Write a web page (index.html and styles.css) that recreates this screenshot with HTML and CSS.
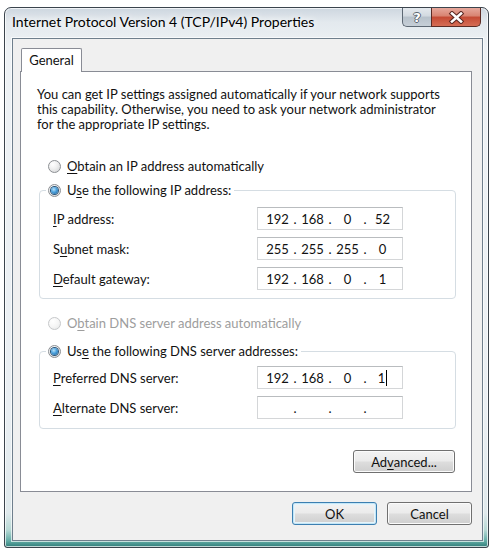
FILE: index.html
```html
<!DOCTYPE html>
<html lang="en">
<head>
<meta charset="utf-8">
<title>Internet Protocol Version 4 (TCP/IPv4) Properties</title>
<link rel="stylesheet" href="styles.css">
</head>
<body>
<div class="window">
  <div class="titlebar">
    <div class="title">Internet Protocol Version 4 (TCP/IPv4) Properties</div>
    <div class="caption-buttons">
      <div class="cap-btn help"><span class="help-glyph">?</span></div>
      <div class="cap-btn close">
        <svg class="close-x" width="17" height="13" viewBox="0 0 17 13">
          <path d="M4 2.5 L13 10.5 M13 2.5 L4 10.5" stroke="#5a2620" stroke-width="4.6" stroke-linecap="square" fill="none"/>
          <path d="M4 2.5 L13 10.5 M13 2.5 L4 10.5" stroke="#ffffff" stroke-width="2.6" stroke-linecap="square" fill="none"/>
        </svg>
      </div>
    </div>
  </div>
  <div class="client">
    <div class="tabs"><div class="tab">General</div></div>
    <div class="panel">
      <p class="intro">You can get IP settings assigned automatically if your network supports<br>this capability. Otherwise, you need to ask your network administrator<br>for the appropriate IP settings.</p>

      <div class="option option-ip-auto"><span class="radio"></span><span><span class="ak">O</span>btain an IP address automatically</span></div>

      <fieldset class="group group-ip">
        <legend class="legend"><span class="option"><span class="radio checked"></span><span>U<span class="ak">s</span>e the following IP address:</span></span></legend>
        <div class="rows">
          <div class="row"><span class="row-label"><span class="ak">I</span>P address:</span>
            <div class="ipbox"><span class="oct">192</span><span class="dot">.</span><span class="oct">168</span><span class="dot">.</span><span class="oct">0</span><span class="dot">.</span><span class="oct">52</span></div></div>
          <div class="row"><span class="row-label">S<span class="ak">u</span>bnet mask:</span>
            <div class="ipbox"><span class="oct">255</span><span class="dot">.</span><span class="oct">255</span><span class="dot">.</span><span class="oct">255</span><span class="dot">.</span><span class="oct">0</span></div></div>
          <div class="row"><span class="row-label"><span class="ak">D</span>efault gateway:</span>
            <div class="ipbox"><span class="oct">192</span><span class="dot">.</span><span class="oct">168</span><span class="dot">.</span><span class="oct">0</span><span class="dot">.</span><span class="oct">1</span></div></div>
        </div>
      </fieldset>

      <div class="option option-dns-auto disabled"><span class="radio"></span><span>O<span class="ak">b</span>tain DNS server address automatically</span></div>

      <fieldset class="group group-dns">
        <legend class="legend"><span class="option"><span class="radio checked"></span><span>Us<span class="ak">e</span> the following DNS server addresses:</span></span></legend>
        <div class="rows">
          <div class="row"><span class="row-label"><span class="ak">P</span>referred DNS server:</span>
            <div class="ipbox"><span class="oct">192</span><span class="dot">.</span><span class="oct">168</span><span class="dot">.</span><span class="oct">0</span><span class="dot">.</span><span class="oct"><span class="caret">1</span></span></div></div>
          <div class="row"><span class="row-label"><span class="ak">A</span>lternate DNS server:</span>
            <div class="ipbox"><span class="oct"></span><span class="dot">.</span><span class="oct"></span><span class="dot">.</span><span class="oct"></span><span class="dot">.</span><span class="oct"></span></div></div>
        </div>
      </fieldset>

      <div class="advanced-row"><button class="btn btn-advanced" type="button">Ad<span class="ak">v</span>anced...</button></div>
    </div>
    <div class="actions">
      <button class="btn btn-default" type="button">OK</button>
      <button class="btn" type="button">Cancel</button>
    </div>
  </div>
</div>
</body>
</html>
```

FILE: styles.css
```css
* { box-sizing: border-box; }

html, body {
  margin: 0;
  padding: 0;
  background: #ffffff;
}

body {
  font-family: Lato, "Liberation Sans", sans-serif;
  font-size: 13px;
  color: #111111;
}

.window {
  margin: 7px 0 0 4px;
  width: 485px;
  height: 541px;
  border: 1px solid #3b444d;
  border-radius: 7px 7px 3px 3px;
  padding: 0 5px 6px 7px;
  background:
    linear-gradient(to bottom, rgba(255,255,255,0) 0, rgba(255,255,255,0) 505px, #b7d9d5 522px, #62aca6 533px, #2f7d79 539px),
    linear-gradient(to bottom, #cdd6df 0, #e3e9ee 14px, #eef2f5 40px, #eaeff3 400px, #dfe9ec 505px);
  box-shadow: inset 0 0 0 1px rgba(255,255,255,0.7);
}

.titlebar {
  height: 30px;
  display: flex;
  justify-content: space-between;
  align-items: flex-start;
}

.title {
  padding-top: 6px;
  font-size: 14px;
  line-height: 16px;
  color: #000000;
  text-shadow: 0 0 6px #ffffff, 0 0 10px #ffffff;
}

.caption-buttons {
  display: flex;
  margin-right: 2px;
}

.cap-btn {
  height: 19px;
  display: flex;
  align-items: center;
  justify-content: center;
  border: 1px solid #5d6874;
  border-top: none;
}

.help {
  width: 29px;
  border-right: none;
  border-radius: 0 0 0 5px;
  background: linear-gradient(to bottom, #e4e9ee 0%, #d2d9e0 45%, #b7c1cb 50%, #c6cfd7 100%);
}

.help-glyph {
  font-family: "DejaVu Sans", sans-serif;
  font-weight: bold;
  font-size: 13px;
  line-height: 13px;
  color: #ffffff;
  text-shadow: 1px 0 0 #5a6570, -1px 0 0 #5a6570, 0 1px 0 #5a6570, 0 -1px 0 #5a6570;
}

.close {
  width: 50px;
  border-color: #5b2b24;
  border-radius: 0 0 5px 0;
  background: linear-gradient(to bottom, #e6a89c 0%, #d88371 45%, #c44a34 50%, #d56d55 100%);
}

.close-x { display: block; }

.client {
  height: 503px;
  border: 1px solid #6f7f8d;
  background: #f0f0f0;
  padding: 9px 10px 0 7px;
  display: flex;
  flex-direction: column;
  box-shadow: 0 0 0 1px rgba(255,255,255,0.65);
}

.tabs {
  display: flex;
  padding-left: 1px;
}

.tab {
  position: relative;
  z-index: 1;
  width: 61px;
  height: 24px;
  margin-bottom: -1px;
  border: 1px solid #898c95;
  border-bottom: none;
  border-radius: 2px 2px 0 0;
  background: #ffffff;
  text-align: center;
  line-height: 22px;
}

.panel {
  height: 421px;
  border: 1px solid #898c95;
  background: #ffffff;
  padding: 15px 15px 0 16px;
}

.intro {
  margin: 0;
  line-height: 15px;
}

.ak {
  text-decoration: underline;
  text-underline-offset: 2px;
}

.option {
  display: flex;
  align-items: center;
  gap: 6px;
  height: 16px;
  line-height: 16px;
}

.option-ip-auto {
  margin: 26px 0 0 11px;
}

.option-dns-auto {
  margin: 16px 0 0 11px;
}

.disabled { color: #9d9d9d; }

.radio {
  width: 13px;
  height: 13px;
  flex: none;
  border-radius: 50%;
  border: 1px solid #8c8f93;
  background: radial-gradient(circle at 35% 30%, #ffffff 0%, #f1f1f1 40%, #cfd1d3 100%);
  display: flex;
  align-items: center;
  justify-content: center;
}

.radio.checked::after {
  content: "";
  width: 7px;
  height: 7px;
  border-radius: 50%;
  background: radial-gradient(circle at 40% 35%, #b9e3fb 0%, #4aa0dc 45%, #1c5d92 100%);
  box-shadow: 0 0 0 1px #2a5478;
}

.disabled .radio {
  border-color: #c6c8ca;
  background: radial-gradient(circle at 35% 30%, #ffffff 0%, #f6f6f6 50%, #e4e5e6 100%);
}

.group {
  margin: 0 0 0 2px;
  border: 1px solid #d5dde3;
  border-radius: 4px;
  min-width: 0;
}

.group-ip {
  margin-top: 8px;
  padding: 9px 0 8px 6px;
}

.group-dns {
  margin-top: 12px;
  padding: 7px 0 9px 6px;
}

.legend {
  padding: 0 3px 0 2px;
  line-height: 16px;
  height: 16px;
}

.rows {
  display: flex;
  flex-direction: column;
  gap: 7px;
  padding-left: 7px;
}

.row {
  display: flex;
  align-items: center;
  height: 23px;
}

.row-label {
  width: 204px;
  flex: none;
}

.ipbox {
  width: 146px;
  height: 23px;
  border: 1px solid #d4d6d8;
  border-top-color: #b9bcbf;
  background: #ffffff;
  display: flex;
  align-items: center;
  padding-left: 7px;
}

.oct {
  width: 25px;
  text-align: center;
}

.dot {
  width: 10px;
  text-align: center;
}

.caret {
  border-right: 1px solid #000000;
  padding-right: 1px;
}

.advanced-row {
  display: flex;
  justify-content: flex-end;
  margin: 21px 1px 0 0;
}

.btn {
  height: 23px;
  padding: 0;
  font-family: Lato, "Liberation Sans", sans-serif;
  font-size: 13px;
  color: #111111;
  border: 1px solid #707070;
  border-radius: 3px;
  background: linear-gradient(to bottom, #f3f3f3 0%, #ebebeb 48%, #dddddd 52%, #cfcfcf 100%);
  box-shadow: inset 0 0 0 1px #fbfbfb;
  width: 85px;
}

.btn-advanced {
  width: 102px;
}

.btn-default {
  border-color: #3c7fb1;
  box-shadow: inset 0 0 0 1px #c4e6f6, inset 0 0 0 2px #e6f4fb;
}

.actions {
  display: flex;
  justify-content: flex-end;
  gap: 10px;
  margin-top: 10px;
}
```
